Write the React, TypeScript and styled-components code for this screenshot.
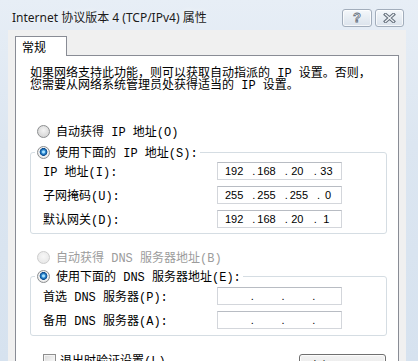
import { Fragment } from "react";
import styled, { createGlobalStyle } from "styled-components";

const GlobalStyle = createGlobalStyle`
  html, body {
    margin: 0;
    padding: 0;
  }
  body {
    width: 418px;
    height: 361px;
    overflow: hidden;
    font-family: "Liberation Mono", "Noto Sans CJK SC", monospace;
    font-size: 12px;
    color: #000;
  }
`;

const Window = styled.div`
  width: 418px;
  height: 361px;
  overflow: hidden;
  display: flex;
  flex-direction: column;
  background: linear-gradient(180deg, #e7eef6 0%, #dce6f1 40%, #d6e2ef 100%);
`;

const TitleBar = styled.div`
  height: 30px;
  flex: none;
  box-sizing: border-box;
  padding: 9px 14px 0 12px;
  display: flex;
  align-items: flex-start;
`;

const Title = styled.div`
  font-family: "Noto Sans", "Noto Sans CJK SC", sans-serif;
  font-size: 12px;
  line-height: 18px;
  color: #1b1b1b;
  text-shadow: 0 0 6px rgba(255, 255, 255, 0.9);
`;

const CaptionButtons = styled.div`
  margin-left: auto;
  display: flex;
  gap: 3px;
`;

const CaptionButton = styled.div<{ $w: number }>`
  width: ${(p) => p.$w}px;
  height: 18px;
  box-sizing: border-box;
  border: 1px solid #a2adbb;
  border-radius: 3px;
  background: linear-gradient(180deg, #f5f8fb 0%, #e7edf3 50%, #dbe3ec 100%);
  box-shadow: inset 0 0 0 1px rgba(255, 255, 255, 0.7);
  display: flex;
  align-items: center;
  justify-content: center;
`;

const HelpGlyph = styled.span`
  font-family: "Liberation Sans", sans-serif;
  font-weight: bold;
  font-size: 13px;
  line-height: 14px;
  color: #eef2f6;
  -webkit-text-stroke: 0.8px #66707c;
`;

const Client = styled.div`
  flex: 1;
  min-height: 0;
  margin: 0 12px 0 8px;
  background: #f0f0f0;
  padding: 6px 7px 0;
  display: flex;
  flex-direction: column;
`;

const TabStrip = styled.div`
  display: flex;
`;

const Tab = styled.div`
  position: relative;
  z-index: 1;
  width: 52px;
  height: 20px;
  box-sizing: border-box;
  margin-bottom: -1px;
  border: 1px solid #898c95;
  border-bottom: none;
  background: #fff;
  padding-left: 6px;
  font-family: "Noto Sans CJK SC", sans-serif;
  font-size: 12px;
  line-height: 19px;
`;

const Panel = styled.div`
  flex: 1;
  border: 1px solid #898c95;
  background: #fff;
  padding: 12px 11px 0 14px;
`;

const Intro = styled.p`
  margin: 0;
  line-height: 12px;
  white-space: nowrap;
`;

const OptionRow = styled.label<{ $disabled?: boolean; $gap?: number }>`
  display: flex;
  align-items: center;
  gap: 6px;
  height: 16px;
  white-space: nowrap;
  margin-top: ${(p) => p.$gap ?? 0}px;
  padding-left: 7px;
  color: ${(p) => (p.$disabled ? "#9c9c9c" : "#000")};
`;

const LegendRow = styled.label`
  display: flex;
  align-items: center;
  gap: 6px;
  height: 16px;
  white-space: nowrap;
`;

const RadioMark = styled.span<{ $checked?: boolean; $disabled?: boolean }>`
  width: 13px;
  height: 13px;
  flex: none;
  box-sizing: border-box;
  border-radius: 50%;
  border: 1px solid ${(p) => (p.$disabled ? "#cdcdcd" : "#8c8e90")};
  background: ${(p) =>
    p.$checked
      ? "radial-gradient(circle at 50% 45%, #a9e2ff 0 1px, #2f8ad2 2px, #0c4c8e 3.6px, #f5f5f5 4.2px, #d6d6d6 100%)"
      : p.$disabled
      ? "radial-gradient(circle at 50% 40%, #f7f7f7, #e4e4e4)"
      : "radial-gradient(circle at 50% 40%, #f4f4f4, #cdcdcd)"};
`;

const GroupBox = styled.fieldset<{ $top: number; $gap: number; $bottom: number }>`
  margin: ${(p) => p.$gap}px 0 0;
  min-width: 0;
  border: 1px solid #d5dde3;
  border-radius: 3px;
  padding: ${(p) => p.$top}px 0 ${(p) => p.$bottom}px 0;
`;

const GroupLegend = styled.legend`
  margin-left: 4px;
  padding: 0 2px;
`;

const FieldGrid = styled.div`
  display: grid;
  grid-template-columns: 174px 125px;
  row-gap: 6px;
  align-items: center;
  padding-left: 12px;
`;

const FieldLabel = styled.span`
  white-space: nowrap;
`;

const AddressBox = styled.div`
  height: 18px;
  box-sizing: border-box;
  display: grid;
  grid-template-columns: repeat(4, 1fr);
  border: 1px solid #d3d6db;
  border-top-color: #b8bcc3;
  background: #fff;
`;

const Segment = styled.div`
  display: grid;
  grid-template-columns: 7px 1fr 7px;
  align-items: center;
  font-family: "Liberation Sans", sans-serif;
  font-size: 11px;
  line-height: 16px;
`;

const Dot = styled.span`
  text-align: center;
`;

const Octet = styled.span`
  text-align: center;
`;

const BottomRow = styled.div`
  display: flex;
  align-items: flex-start;
  justify-content: space-between;
  margin-top: 17px;
  padding: 0 1px 0 13px;
`;

const CheckRow = styled.label`
  display: flex;
  align-items: center;
  gap: 4px;
  height: 14px;
  white-space: nowrap;
`;

const CheckMark = styled.span`
  width: 13px;
  height: 13px;
  box-sizing: border-box;
  border: 1px solid #8f8f8f;
  background: linear-gradient(135deg, #d9d9d9 0%, #f0f0f0 60%, #fbfbfb 100%);
  box-shadow: inset 0 0 0 1px #f4f4f4;
`;

const PushButton = styled.div`
  margin-top: 1px;
  width: 87px;
  height: 23px;
  box-sizing: border-box;
  border: 1px solid #707070;
  border-radius: 3px;
  background: linear-gradient(180deg, #f2f2f2 0%, #ebebeb 50%, #dddddd 51%, #cfcfcf 100%);
  box-shadow: inset 0 0 0 1px #fcfcfc;
  display: flex;
  align-items: center;
  justify-content: center;
`;

type Field = { label: string; octets: string[] };

const ipFields: Field[] = [
  { label: "IP 地址(I):", octets: ["192", "168", "20", "33"] },
  { label: "子网掩码(U):", octets: ["255", "255", "255", "0"] },
  { label: "默认网关(D):", octets: ["192", "168", "20", "1"] },
];

const dnsFields: Field[] = [
  { label: "首选 DNS 服务器(P):", octets: ["", "", "", ""] },
  { label: "备用 DNS 服务器(A):", octets: ["", "", "", ""] },
];

const Address = ({ octets }: { octets: string[] }) => (
  <AddressBox>
    {octets.map((o, i) => (
      <Segment key={i}>
        <Dot>{i > 0 ? "." : ""}</Dot>
        <Octet>{o}</Octet>
      </Segment>
    ))}
  </AddressBox>
);

const Fields = ({ rows }: { rows: Field[] }) => (
  <FieldGrid>
    {rows.map((r) => (
      <Fragment key={r.label}>
        <FieldLabel>{r.label}</FieldLabel>
        <Address octets={r.octets} />
      </Fragment>
    ))}
  </FieldGrid>
);

const CloseIcon = () => (
  <svg width="13" height="10" viewBox="0 0 13 10">
    <path d="M2.5 1.5 L10.5 8.5 M10.5 1.5 L2.5 8.5" stroke="#66707c" strokeWidth="3.4" strokeLinecap="square" />
    <path d="M2.5 1.5 L10.5 8.5 M10.5 1.5 L2.5 8.5" stroke="#eef2f6" strokeWidth="1.3" strokeLinecap="square" />
  </svg>
);

const App = () => {
  return (
    <>
      <GlobalStyle />
      <Window>
        <TitleBar>
          <Title>Internet 协议版本 4 (TCP/IPv4) 属性</Title>
          <CaptionButtons>
            <CaptionButton $w={30}>
              <HelpGlyph>?</HelpGlyph>
            </CaptionButton>
            <CaptionButton $w={29}>
              <CloseIcon />
            </CaptionButton>
          </CaptionButtons>
        </TitleBar>
        <Client>
          <TabStrip>
            <Tab>常规</Tab>
          </TabStrip>
          <Panel>
            <Intro>
              如果网络支持此功能，则可以获取自动指派的 IP 设置。否则，
              <br />
              您需要从网络系统管理员处获得适当的 IP 设置。
            </Intro>

            <OptionRow $gap={31}>
              <RadioMark />
              自动获得 IP 地址(O)
            </OptionRow>
            <GroupBox $gap={5} $top={2} $bottom={5}>
              <GroupLegend>
                <LegendRow>
                  <RadioMark $checked />
                  使用下面的 IP 地址(S):
                </LegendRow>
              </GroupLegend>
              <Fields rows={ipFields} />
            </GroupBox>

            <OptionRow $gap={15} $disabled>
              <RadioMark $disabled />
              自动获得 DNS 服务器地址(B)
            </OptionRow>
            <GroupBox $gap={3} $top={3} $bottom={6}>
              <GroupLegend>
                <LegendRow>
                  <RadioMark $checked />
                  使用下面的 DNS 服务器地址(E):
                </LegendRow>
              </GroupLegend>
              <Fields rows={dnsFields} />
            </GroupBox>

            <BottomRow>
              <CheckRow>
                <CheckMark />
                退出时验证设置(L)
              </CheckRow>
              <PushButton>高级(V)...</PushButton>
            </BottomRow>
          </Panel>
        </Client>
      </Window>
    </>
  );
};

export default App;
